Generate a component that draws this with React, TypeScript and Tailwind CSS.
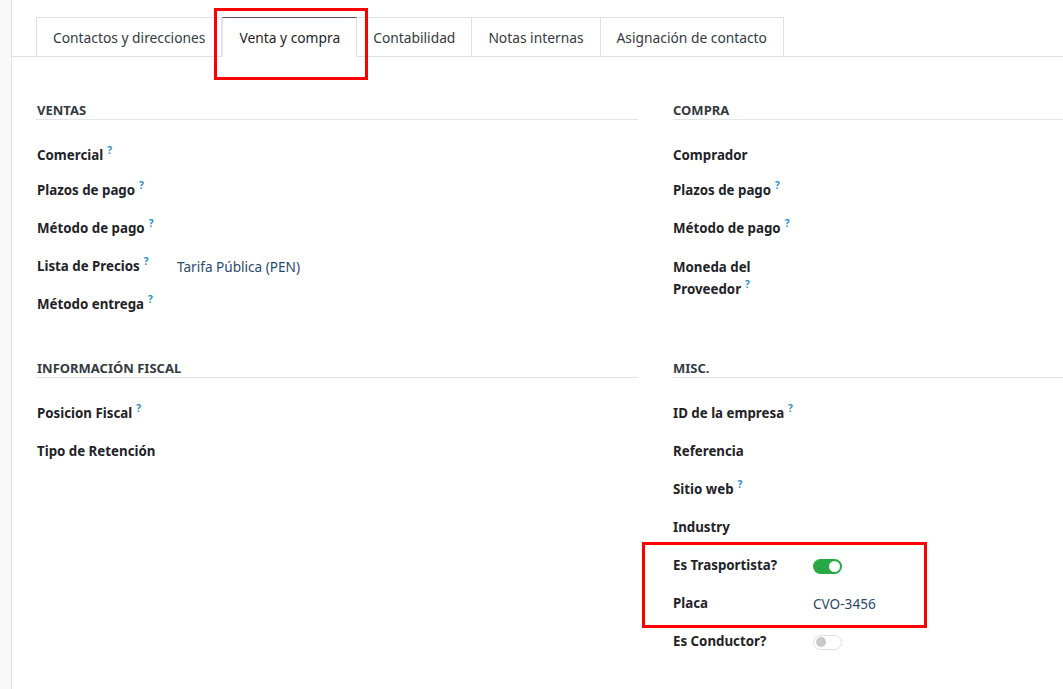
import React from "react";

const Q = () => (
  <span className="relative -top-[6px] ml-[4px] text-[10px] font-bold leading-none text-[#1f8fc4]">?</span>
);

type RowProps = {
  label: React.ReactNode;
  q?: boolean;
  value?: React.ReactNode;
  cls?: string;
  labelCls?: string;
  left?: boolean;
};

const Row = ({ label, q, value, cls = "h-[38px] items-center pt-[2px]", labelCls = "", left }: RowProps) => (
  <div className={`flex ${cls} ${left ? "pl-[1px]" : ""}`}>
    <div className={`w-[140px] shrink-0 text-[13.3px] font-bold text-[#1f2328] ${labelCls}`}>
      {label}
      {q && <Q />}
    </div>
    <div className="flex-1 text-[13.6px] text-[#2b4a6a]">{value}</div>
  </div>
);

const Heading = ({ children, left }: { children: React.ReactNode; left?: boolean }) => (
  <div
    className={`h-[20px] border-b border-[#e3e5e8] pt-[1px] text-[13px] font-bold uppercase leading-[18px] text-[#343a40] ${
      left ? "pl-[1px]" : ""
    }`}
  >
    {children}
  </div>
);

const Toggle = ({ on }: { on: boolean }) =>
  on ? (
    <div className="flex h-[15px] w-[29px] items-center justify-end rounded-full bg-[#28a745] pr-[2px]">
      <div className="h-[11px] w-[11px] rounded-full bg-white" />
    </div>
  ) : (
    <div className="flex h-[15px] w-[29px] items-center rounded-full border border-[#dcdfe3] bg-white pl-[2px]">
      <div className="h-[10px] w-[10px] rounded-full bg-[#c6c8cb]" />
    </div>
  );

const tabs = [
  "Contactos y direcciones",
  "Venta y compra",
  "Contabilidad",
  "Notas internas",
  "Asignación de contacto",
];

export default function App() {
  return (
    <div
      className="relative flex h-[689px] w-[1063px] overflow-hidden bg-white"
      style={{ fontFamily: '"Noto Sans", "Open Sans", sans-serif' }}
    >
      <div className="w-[12px] shrink-0 border-r border-[#dee2e6] bg-[#f8f9fa]" />
      <div className="flex-1">
        {/* Tabs */}
        <div className="flex border-b border-[#dee2e6] pl-[24px] pt-[17px]">
          {tabs.map((t, i) => {
            const active = i === 1;
            return (
              <div
                key={t}
                className={`-mb-px flex h-[40px] items-center border-[#dee2e6] px-[16px] pt-[2px] text-[13.8px] ${
                  i === 0 ? "border-l" : ""
                } border-r border-t ${
                  active
                    ? "border-t-[#5e4a5c] border-b border-b-white bg-white text-[#1f2328]"
                    : "text-[#343a40]"
                } ${i === 1 ? "border-l" : ""}`}
              >
                {t}
              </div>
            );
          })}
        </div>

        {/* Content */}
        <div className="flex pl-[24px] pt-[43px]">
          <div className="w-[602px] shrink-0">
            <Heading left>Ventas</Heading>
            <div className="mt-[16px]">
              <Row left label="Comercial" q cls="h-[35px] items-center" labelCls="pt-[5px]" />
              <Row left label="Plazos de pago" q />
              <Row left label="Método de pago" q />
              <Row left label="Lista de Precios" q value="Tarifa Pública (PEN)" />
              <Row left label="Método entrega" q />
            </div>
            <div className="mt-[35px]">
              <Heading left>Información fiscal</Heading>
            </div>
            <div className="mt-[16px]">
              <Row left label="Posicion Fiscal" q />
              <Row left label="Tipo de Retención" />
            </div>
          </div>
          <div className="ml-[35px] flex-1">
            <Heading>Compra</Heading>
            <div className="mt-[16px]">
              <Row label="Comprador" cls="h-[35px] items-center" labelCls="pt-[5px]" />
              <Row label="Plazos de pago" q />
              <Row label="Método de pago" q />
              <Row
                label={
                  <>
                    Moneda del
                    <br />
                    Proveedor
                  </>
                }
                q
                cls="h-[76px] items-start pt-[9px]"
                labelCls="leading-[22px]"
              />
            </div>
            <div className="mt-[35px]">
              <Heading>Misc.</Heading>
            </div>
            <div className="mt-[16px]">
              <Row label="ID de la empresa" q />
              <Row label="Referencia" />
              <Row label="Sitio web" q />
              <Row label="Industry" />
              <Row label="Es Trasportista?" value={<Toggle on />} />
              <Row label="Placa" value="CVO-3456" />
              <Row label="Es Conductor?" value={<Toggle on={false} />} />
            </div>
          </div>
        </div>
      </div>

      {/* Red annotation boxes */}
      <div className="pointer-events-none absolute left-[214px] top-[8px] h-[72px] w-[154px] border-[3px] border-[#ff0000]" />
      <div className="pointer-events-none absolute left-[642px] top-[542px] h-[86px] w-[285px] border-[3px] border-[#ff0000]" />
    </div>
  );
}
